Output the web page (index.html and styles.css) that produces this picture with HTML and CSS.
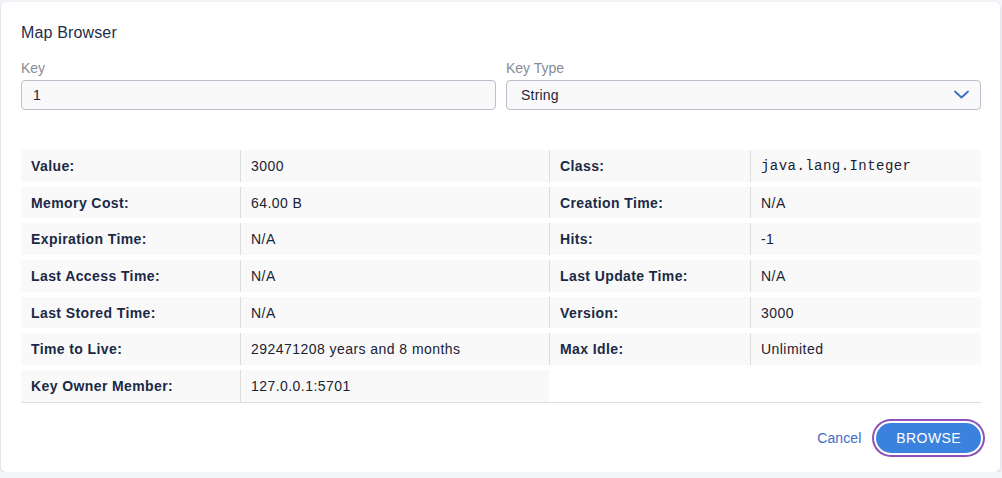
FILE: index.html
```html
<!DOCTYPE html>
<html lang="en">
<head>
<meta charset="utf-8">
<title>Map Browser</title>
<link rel="stylesheet" href="styles.css">
</head>
<body>
<div class="dialog">
  <h2 class="title">Map Browser</h2>
  <div class="fields">
    <div class="field">
      <label class="field-label">Key</label>
      <div class="input">1</div>
    </div>
    <div class="field">
      <label class="field-label">Key Type</label>
      <div class="input select">
        <span>String</span>
        <svg class="chevron" width="15" height="9" viewBox="0 0 15 9"><path d="M1 1.5 L7.5 7.5 L14 1.5" fill="none" stroke="#3a6dc4" stroke-width="1.8" stroke-linecap="round" stroke-linejoin="round"/></svg>
      </div>
    </div>
  </div>

  <div class="table">
    <div class="row">
      <div class="cell key">Value:</div><div class="cell">3000</div>
      <div class="cell key">Class:</div><div class="cell mono">java.lang.Integer</div>
    </div>
    <div class="row">
      <div class="cell key">Memory Cost:</div><div class="cell">64.00 B</div>
      <div class="cell key">Creation Time:</div><div class="cell">N/A</div>
    </div>
    <div class="row">
      <div class="cell key">Expiration Time:</div><div class="cell">N/A</div>
      <div class="cell key">Hits:</div><div class="cell">-1</div>
    </div>
    <div class="row">
      <div class="cell key">Last Access Time:</div><div class="cell">N/A</div>
      <div class="cell key">Last Update Time:</div><div class="cell">N/A</div>
    </div>
    <div class="row">
      <div class="cell key">Last Stored Time:</div><div class="cell">N/A</div>
      <div class="cell key">Version:</div><div class="cell">3000</div>
    </div>
    <div class="row">
      <div class="cell key">Time to Live:</div><div class="cell">292471208 years and 8 months</div>
      <div class="cell key">Max Idle:</div><div class="cell">Unlimited</div>
    </div>
    <div class="row">
      <div class="cell key">Key Owner Member:</div><div class="cell">127.0.0.1:5701</div>
      <div class="cell empty"></div><div class="cell empty"></div>
    </div>
  </div>

  <div class="footer">
    <button class="btn-text">Cancel</button>
    <button class="btn-primary">BROWSE</button>
  </div>
</div>
</body>
</html>
```

FILE: styles.css
```css
* { box-sizing: border-box; }

html, body {
  margin: 0;
  padding: 0;
  background: #f3f5f9;
  font-family: "Liberation Sans", Arial, sans-serif;
}

body {
  padding: 2px 2px 0 1px;
}

.dialog {
  width: 999px;
  height: 470px;
  background: #ffffff;
  border-radius: 5px;
  box-shadow: 0 1px 3px rgba(40, 50, 80, 0.14), 0 2px 4px rgba(40, 50, 80, 0.06);
  padding: 20px 19px 0 20px;
  display: flex;
  flex-direction: column;
}

.title {
  margin: 0;
  font-size: 16px;
  line-height: 22px;
  font-weight: 400;
  color: #1f2d4a;
  letter-spacing: 0.15px;
}

.fields {
  display: flex;
  gap: 10px;
  margin-top: 15px;
}

.field {
  flex: 1;
  display: flex;
  flex-direction: column;
}

.field-label {
  font-size: 14px;
  line-height: 18px;
  color: #868c96;
  margin-bottom: 3px;
}

.input {
  height: 29.5px;
  border: 1px solid #b9c1cd;
  border-radius: 4px;
  background: #f9f9f9;
  padding: 0 11px;
  font-size: 14px;
  color: #1f2535;
  display: flex;
  align-items: center;
  letter-spacing: 0.2px;
}

.select {
  padding-left: 14px;
  justify-content: space-between;
}

.chevron {
  margin-right: 0;
}

.table {
  margin-top: 40.5px;
  display: flex;
  flex-direction: column;
  gap: 5px;
  border-bottom: 1px solid #dcdcdc;
}

.row {
  display: grid;
  grid-template-columns: 219px 309px 201px 1fr;
  height: 31.7px;
}

.cell {
  background: #f9f9f9;
  display: flex;
  align-items: center;
  padding: 0 10px;
  font-size: 14px;
  color: #1c2233;
  letter-spacing: 0.45px;
  white-space: nowrap;
}

.cell + .cell {
  border-left: 1px solid #dcdcdc;
}

.cell.key {
  font-weight: 700;
  color: #1b2946;
  letter-spacing: 0.4px;
}

.cell.mono {
  font-family: "Liberation Mono", "DejaVu Sans Mono", monospace;
  letter-spacing: 0.45px;
}

.cell.empty {
  background: transparent;
  border-left: none;
}

.footer {
  margin-top: 20px;
  display: flex;
  justify-content: flex-end;
  align-items: center;
  gap: 15px;
}

.btn-text {
  border: none;
  background: none;
  padding: 0;
  font-family: inherit;
  font-size: 14px;
  color: #3a6dc4;
  letter-spacing: 0.1px;
}

.btn-primary {
  height: 30px;
  padding: 0 20px;
  border: none;
  border-radius: 15px;
  background: #3a82de;
  color: #ffffff;
  font-family: inherit;
  font-size: 14px;
  letter-spacing: 0.4px;
  box-shadow: 0 0 0 2px #ffffff, 0 0 0 4px #8c52ba;
}
```
